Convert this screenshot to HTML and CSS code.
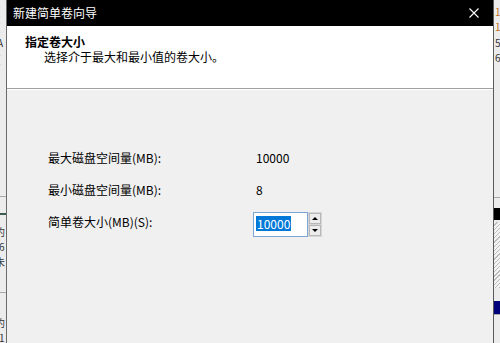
FILE: index.html
```html
<!DOCTYPE html>
<html lang="zh-CN">
<head>
  <meta charset="UTF-8" />
  <title>新建简单卷向导</title>
  <link rel="stylesheet" href="styles.css">
</head>
<body>
  <div class="screen">
    <div class="back back-left">
      <span class="frag f1">(</span>
      <span class="frag f2">(</span>
      <span class="frag f3">A</span>
      <span class="frag f4">[</span>
      <span class="bar-line l1"></span>
      <span class="bar-line l2"></span>
      <span class="frag f5">约</span>
      <span class="frag f6">6</span>
      <span class="frag f7">未</span>
      <span class="bar-line l3"></span>
      <span class="frag f8">约</span>
      <span class="frag f9">1</span>
    </div>

    <div class="dialog">
      <div class="titlebar">
        <span class="title">新建简单卷向导</span>
        <svg class="close" width="10" height="10" viewBox="0 0 10 10">
          <path d="M0.5 0.5 L9.5 9.5 M9.5 0.5 L0.5 9.5" stroke="#fff" stroke-width="1.1" fill="none"/>
        </svg>
      </div>

      <div class="header">
        <div class="head-title">指定卷大小</div>
        <div class="head-sub">选择介于最大和最小值的卷大小。</div>
      </div>

      <div class="content">
        <div class="form">
          <div class="label">最大磁盘空间量(MB):</div>
          <div class="value">10000</div>

          <div class="label">最小磁盘空间量(MB):</div>
          <div class="value">8</div>

          <div class="label">简单卷大小(MB)(S):</div>
          <div class="value">
            <div class="spinner">
              <div class="spin-input"><span class="selected">10000</span></div>
              <div class="spin-buttons">
                <div class="spin-btn"><span class="tri up"></span></div>
                <div class="spin-btn"><span class="tri down"></span></div>
              </div>
            </div>
          </div>
        </div>
      </div>
    </div>

    <div class="back back-right">
      <span class="frag r1">1</span>
      <span class="frag r2">1</span>
      <span class="frag r3">5</span>
      <span class="frag r4">6</span>
      <span class="bar-line rl1"></span>
      <span class="dark-block"></span>
      <span class="hatch"></span>
      <span class="bar-line rl2"></span>
      <span class="blue-block"></span>
    </div>
  </div>
</body>
</html>
```

FILE: styles.css
```css
* {
  margin: 0;
  padding: 0;
  box-sizing: border-box;
}

html, body {
  width: 500px;
  height: 343px;
  overflow: hidden;
  background: #f0f0f0;
  font-family: "Noto Sans CJK SC", "Liberation Sans", sans-serif;
  font-size: 12px;
  color: #000;
}

.screen {
  display: flex;
  height: 343px;
}

/* windows behind the dialog */
.back {
  position: relative;
  overflow: hidden;
  background: #ececec;
}

.back-left {
  width: 7px;
  border-right: 1px solid #6a6a6a;
}

.back-right {
  width: 7px;
  border-left: 1px solid #5a5a5a;
}

.frag {
  position: absolute;
  font-size: 10px;
  line-height: 11px;
  color: #333;
}

.f1 { top: 5px; left: -3px; }
.f2 { top: 21px; left: -3px; }
.f3 { top: 37px; left: -3px; }
.f4 { top: 53px; left: -3px; }
.f5 { top: 226px; left: -5px; }
.f6 { top: 241px; left: -1px; }
.f7 { top: 256px; left: -5px; }
.f8 { top: 317px; left: -5px; }
.f9 { top: 332px; left: -1px; }

.r1 { top: 6px; left: 1px; color: #c07020; }
.r2 { top: 21px; left: 1px; color: #c07020; }
.r3 { top: 37px; left: 1px; }
.r4 { top: 52px; left: 1px; }

.bar-line {
  position: absolute;
  left: 0;
  width: 100%;
  height: 1px;
  background: #a8a8a8;
}

.l1 { top: 196px; }
.l2 { top: 213px; height: 2px; background: #3c5a50; }
.l3 { top: 292px; }

.rl1 { top: 197px; }
.rl2 { top: 314px; }

.dark-block {
  position: absolute;
  left: 0;
  top: 208px;
  width: 100%;
  height: 12px;
  background: #000;
}

.hatch {
  position: absolute;
  left: 0;
  top: 222px;
  width: 100%;
  height: 66px;
  background: repeating-linear-gradient(135deg, #f2f2f2 0 2px, #bdbdbd 2px 3px);
}

.blue-block {
  position: absolute;
  left: 0;
  top: 301px;
  width: 100%;
  height: 13px;
  background: #00007a;
}

/* dialog */
.dialog {
  width: 486px;
  display: flex;
  flex-direction: column;
  background: #f0f0f0;
}

.titlebar {
  height: 26px;
  background: #000;
  color: #fff;
  display: flex;
  align-items: center;
  justify-content: space-between;
  padding: 0 14px 0 6px;
}

.title {
  font-size: 12px;
  line-height: 14px;
}

.close {
  display: block;
}

.header {
  height: 63px;
  background: #fff;
  border-bottom: 1px solid #a0a0a0;
  box-shadow: 0 1px 0 #fff;
  padding: 8px 0 0 18px;
}

.head-title {
  font-weight: bold;
  line-height: 15px;
}

.head-sub {
  line-height: 15px;
  padding-left: 19px;
}

.content {
  flex: 1;
  padding: 53px 0 0 41px;
}

.form {
  display: grid;
  grid-template-columns: 208px auto;
  grid-auto-rows: 32px;
  align-items: center;
}

.label,
.value {
  line-height: 16px;
}

.spinner {
  display: flex;
  height: 25px;
  margin-left: -3px;
  margin-top: 5px;
}

.spin-input {
  width: 55px;
  height: 25px;
  background: #fff;
  border: 1px solid #7aa7d8;
  padding: 3px 0 0 2px;
}

.selected {
  background: #0078d7;
  color: #fff;
  line-height: 15px;
  display: inline-block;
  padding: 0 1px;
}

.spin-buttons {
  width: 14px;
  display: flex;
  flex-direction: column;
  gap: 1px;
  background: #d6d6d6;
  padding: 1px;
}

.spin-btn {
  flex: 1;
  background: #ececec;
  border: 1px solid #b8b8b8;
  display: flex;
  align-items: center;
  justify-content: center;
}

.tri {
  width: 0;
  height: 0;
  border-left: 3px solid transparent;
  border-right: 3px solid transparent;
}

.tri.up {
  border-bottom: 3px solid #000;
}

.tri.down {
  border-top: 3px solid #000;
}
```
